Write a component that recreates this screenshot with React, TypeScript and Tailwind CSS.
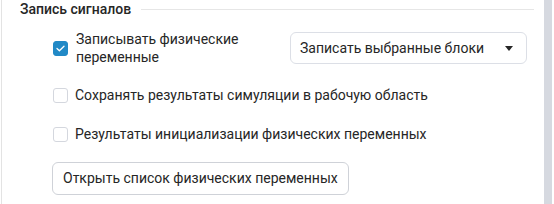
import { useState } from "react";

function Check({ checked, onChange }: { checked: boolean; onChange: () => void }) {
    return (
        <button
            type="button"
            onClick={onChange}
            className={`w-[15px] h-[15px] shrink-0 rounded-[3px] flex items-center justify-center border ${checked ? "bg-[#2189c6] border-[#2189c6]" : "bg-white border-[#d4d7de]"}`}
        >
            {checked && (
                <svg width="9" height="7" viewBox="0 0 9 7" fill="none">
                    <path d="M1 3.5L3.4 5.8L8 1.2" stroke="white" strokeWidth="1.3" strokeLinecap="round" strokeLinejoin="round" />
                </svg>
            )}
        </button>
    );
}

export default function App() {
    const [rec, setRec] = useState(true);
    const [save, setSave] = useState(false);
    const [init, setInit] = useState(false);

    return (
        <div className="w-[554px] h-[204px] bg-white flex overflow-hidden text-[14px] text-[#262626] font-['Roboto',sans-serif]">
            <div className="flex-1 border-l border-[#e3e3e3] ml-px pl-[18px] pr-[10px] flex flex-col">
                <div className="flex items-center gap-[10px] h-[19px]">
                    <span className="font-medium text-[#262626]">Запись сигналов</span>
                    <div className="flex-1 h-px bg-[#e6e6e6]" />
                </div>

                <div className="pl-[33px] flex flex-col">
                    <div className="flex items-center mt-[11px] h-[36px]">
                        <label className="w-[237px] flex items-center gap-[8px] cursor-pointer">
                            <Check checked={rec} onChange={() => setRec(!rec)} />
                            <span className="leading-[18px] w-[190px]">Записывать физические переменные</span>
                        </label>
                        <div className="w-[237px] h-[32px] border border-[#dcdfe6] rounded-[6px] flex items-center justify-between pl-[9px] pr-[13px]">
                            <span>Записать выбранные блоки</span>
                            <svg width="8" height="5" viewBox="0 0 8 5">
                                <path d="M0 0H8L4 5Z" fill="#262626" />
                            </svg>
                        </div>
                    </div>

                    <label className="flex items-center gap-[7px] mt-[17px] h-[24px] cursor-pointer">
                        <Check checked={save} onChange={() => setSave(!save)} />
                        <span>Сохранять результаты симуляции в рабочую область</span>
                    </label>

                    <label className="flex items-center gap-[7px] mt-[15px] h-[24px] cursor-pointer">
                        <Check checked={init} onChange={() => setInit(!init)} />
                        <span>Результаты инициализации физических переменных</span>
                    </label>

                    <div className="mt-[16px]">
                        <button className="h-[33px] px-[10px] border border-[#cfd2d8] rounded-[6px] bg-white -ml-px">
                            Открыть список физических переменных
                        </button>
                    </div>
                </div>
            </div>
            <div className="w-[8px] bg-[#d6d9e0] mr-[2px]" />
        </div>
    );
}
